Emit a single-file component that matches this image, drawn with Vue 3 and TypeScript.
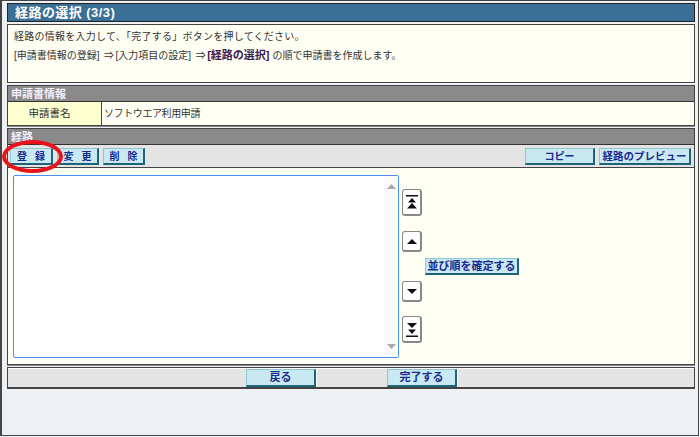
<template>
  <div class="page">
    <div class="title-bar">経路の選択 (3/3)</div>

    <div class="notice">
      <p class="notice__lead">経路の情報を入力して、「完了する」ボタンを押してください。</p>
      <p class="notice__steps">
        <span class="step step--first">[申請書情報の登録]</span><span class="sep">⇒</span><span class="step">[入力項目の設定]</span><span class="sep">⇒</span><b class="step step--now">[経路の選択]</b><span class="notice__rest">の順で申請書を作成します。</span>
      </p>
    </div>

    <div class="section">
      <div class="section__head">申請書情報</div>
      <div class="info-row">
        <div class="info-row__label">申請書名</div>
        <div class="info-row__value">ソフトウエア利用申請</div>
      </div>
    </div>

    <div class="section">
      <div class="section__head">経路</div>
      <div class="toolbar">
        <div class="toolbar__group">
          <button v-for="b in editButtons" :key="b" class="btn btn--edit">{{ b }}</button>
        </div>
        <div class="toolbar__group">
          <button class="btn btn--copy">コピー</button>
          <button class="btn btn--preview">経路のプレビュー</button>
        </div>
      </div>
      <div class="route-body">
        <div class="route-list">
          <div class="route-list__bar">
            <svg width="9" height="5" viewBox="0 0 9 5"><path d="M4.500 0 9 5H0z" fill="#a8a8a8" /></svg>
            <svg width="9" height="5" viewBox="0 0 9 5"><path d="M0 0h9L4.500 5z" fill="#a8a8a8" /></svg>
          </div>
        </div>
        <div class="order">
          <button class="arrow arrow--tall">
            <svg width="12" height="20" viewBox="0 0 12 20">
              <path d="M0 3h12v1.500H0z M6 6l4 4.500H2z M6 11l5 5.500H1z" fill="#111" />
            </svg>
          </button>
          <button class="arrow arrow--up">
            <svg width="10" height="5" viewBox="0 0 10 5"><path d="M5 0l5 5H0z" fill="#111" /></svg>
          </button>
          <button class="arrow arrow--down">
            <svg width="10" height="5" viewBox="0 0 10 5"><path d="M0 0h10L5 5z" fill="#111" /></svg>
          </button>
          <button class="arrow arrow--tall arrow--bottom">
            <svg width="12" height="20" viewBox="0 0 12 20">
              <path d="M1 4h10L6 9z M2 10.500h8L6 15z M0 16.500h12V18H0z" fill="#111" />
            </svg>
          </button>
          <button class="btn btn--confirm">並び順を確定する</button>
        </div>
      </div>
    </div>

    <div class="footer">
      <button class="btn btn--footer">戻る</button>
      <button class="btn btn--footer">完了する</button>
    </div>

    <div class="highlight"></div>
  </div>
</template>

<script setup lang="ts">
const editButtons: string[] = ['登 録', '変 更', '削 除']
</script>

<style>
html,
body {
  margin: 0;
  background: #f2f4f6;
}
</style>

<style scoped>
.page {
  position: relative;
  box-sizing: border-box;
  width: 699px;
  height: 436px;
  padding: 2px 3px 0 5px;
  background: #eef1f4;
  border: 1px solid #444;
  border-left-width: 2px;
  font-family: "Liberation Sans", "Noto Sans CJK JP", sans-serif;
  font-size: 10px;
  color: #333;
  overflow: hidden;
}

p {
  margin: 0;
}

.title-bar {
  box-sizing: border-box;
  height: 19px;
  padding-left: 7px;
  background: #3a7095;
  border: 1px solid #222;
  color: #fff;
  font-size: 13px;
  font-weight: 700;
  letter-spacing: 0.45px;
  line-height: 17px;
}

.notice {
  box-sizing: border-box;
  height: 59px;
  margin-top: 2px;
  padding: 3px 6px;
  background: #fffff3;
  border: 1px solid #444;
  line-height: 18px;
}

.notice__lead {
  letter-spacing: 0.25px;
}

.notice__steps {
  white-space: nowrap;
}

.notice b {
  color: #3a1a50;
}

.step {
  padding-right: 3px;
}

.step--now {
  padding-right: 3px;
  font-size: 11px;
}

.sep {
  display: inline-block;
  width: 13px;
  text-align: center;
}

.section {
  margin-top: 2px;
  background: #fffff3;
  border: 1px solid #444;
  box-shadow: 0 1px 0 #888;
}

.section__head {
  box-sizing: border-box;
  height: 16px;
  padding-left: 3px;
  background: #8a8a8a;
  border-bottom: 1px solid #333;
  color: #f4eefa;
  font-size: 11px;
  font-weight: 700;
  line-height: 17px;
}

.info-row {
  display: flex;
  height: 23px;
  line-height: 23px;
}

.info-row__label {
  box-sizing: border-box;
  width: 94px;
  padding-right: 10px;
  background: #ffffd0;
  border-right: 1px solid #444;
  font-size: 10.500px;
  text-align: center;
}

.info-row__value {
  flex: 1;
  padding-left: 2px;
  letter-spacing: -0.4px;
}

.toolbar {
  box-sizing: border-box;
  display: flex;
  justify-content: space-between;
  align-items: center;
  height: 23px;
  padding: 1px 3px 0 2px;
  background: #e4e4e4;
  border-bottom: 1px solid #444;
}

.toolbar__group {
  display: flex;
  gap: 4px;
}

.btn {
  box-sizing: border-box;
  height: 17px;
  padding: 1px 0 0;
  background: #c8e8f2;
  border: 1px solid;
  border-color: #8fc4d2 #1e6478 #1e6478 #8fc4d2;
  border-width: 1px 2px 2px 1px;
  color: #1a2a8c;
  font-family: inherit;
  font-size: 10px;
  font-weight: 700;
  line-height: 13px;
  white-space: nowrap;
}

.btn--edit {
  width: 42px;
  word-spacing: 5px;
}

.btn--edit:first-child {
  width: 43px;
}

.btn--copy {
  width: 70px;
}

.btn--preview {
  width: 92px;
  font-size: 10.500px;
}

.route-body {
  box-sizing: border-box;
  display: flex;
  height: 196px;
  padding: 7px 0 0 5px;
}

.route-list {
  box-sizing: border-box;
  display: flex;
  justify-content: flex-end;
  width: 386px;
  height: 183px;
  background: #fff;
  border: 1px solid #4a90f0;
  border-radius: 2px;
}

.route-list__bar {
  box-sizing: border-box;
  display: flex;
  flex-direction: column;
  justify-content: space-between;
  align-items: center;
  width: 14px;
  padding: 8px 0;
  background: #fbfbfb;
}

.order {
  position: relative;
  display: flex;
  flex-direction: column;
  align-items: flex-start;
  margin: 14px 0 0 3px;
}

.arrow {
  box-sizing: border-box;
  display: flex;
  flex-shrink: 0;
  align-items: center;
  justify-content: center;
  width: 20px;
  height: 21px;
  padding: 0;
  background: #fff;
  border: 1px solid #888;
  border-width: 1px 2px 2px 1px;
  border-radius: 3px;
}

.arrow--tall {
  height: 27px;
}

.arrow--up {
  margin-top: 15px;
}

.arrow--down {
  margin-top: 29px;
}

.arrow--bottom {
  margin-top: 14px;
}

.btn--confirm {
  position: absolute;
  left: 23px;
  top: 69px;
  width: 94px;
  font-size: 11px;
}

.footer {
  box-sizing: border-box;
  display: flex;
  height: 22px;
  margin-top: 2px;
  padding: 1px 0 0 238px;
  gap: 71px;
  background: #e4e4e4;
  border: 1px solid #444;
  border-bottom-width: 2px;
  box-shadow: inset 0 1px 0 #fff;
}

.btn--footer {
  width: 70px;
  height: 18px;
  padding-top: 0;
  font-size: 11px;
  box-shadow: 1px 0 0 #fff;
}

.highlight {
  position: absolute;
  left: 0;
  top: 139px;
  box-sizing: border-box;
  width: 61px;
  height: 33px;
  border: 4px solid #e8141c;
  border-radius: 50%;
  pointer-events: none;
}
</style>
